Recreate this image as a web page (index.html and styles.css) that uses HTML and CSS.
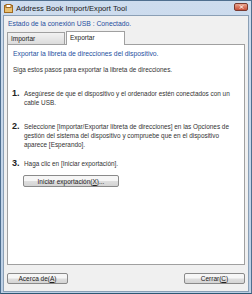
FILE: index.html
```html
<!DOCTYPE html>
<html lang="es">
<head>
    <meta charset="UTF-8">
    <title>Address Book Import/Export Tool</title>
    <link rel="stylesheet" href="styles.css">
</head>
<body>
    <div class="window">
        <div class="titlebar">
            <svg class="app-icon" width="9" height="9" viewBox="0 0 9 9">
                <rect x="0.5" y="1.5" width="8" height="7" fill="#e8c070" stroke="#a06a20"/>
                <rect x="2" y="0.5" width="5" height="3" fill="#fff" stroke="#a06a20"/>
            </svg>
            <span class="title">Address Book Import/Export Tool</span>
            <div class="close-btn">
                <svg width="7" height="6" viewBox="0 0 7 6">
                    <path d="M1 0.5 L6 5.5 M6 0.5 L1 5.5" stroke="#fff" stroke-width="1.4"/>
                </svg>
            </div>
        </div>
        <div class="client">
            <div class="status">Estado de la conexión USB : Conectado.</div>
            <div class="tabs">
                <div class="tab">Importar</div>
                <div class="tab active">Exportar</div>
            </div>
            <div class="panel">
                <div class="heading">Exportar la libreta de direcciones del dispositivo.</div>
                <p class="intro">Siga estos pasos para exportar la libreta de direcciones.</p>
                <div class="step">
                    <span class="num">1.</span>
                    <span class="text">Asegúrese de que el dispositivo y el ordenador estén conectados con un cable USB.</span>
                </div>
                <div class="step">
                    <span class="num">2.</span>
                    <span class="text">Seleccione [Importar/Exportar libreta de direcciones] en las Opciones de gestión del sistema del dispositivo y compruebe que en el dispositivo aparece [Esperando].</span>
                </div>
                <div class="step last">
                    <span class="num">3.</span>
                    <span class="text">Haga clic en [Iniciar exportación].</span>
                </div>
                <button class="btn start-btn">Iniciar exportación(<u>X</u>)...</button>
            </div>
            <div class="footer">
                <button class="btn">Acerca de(<u>A</u>)</button>
                <button class="btn">Cerrar(<u>C</u>)</button>
            </div>
        </div>
    </div>
</body>
</html>
```

FILE: styles.css
```css
body {
    margin: 0;
    padding: 0;
    font-family: "Liberation Sans", Arial, sans-serif;
}

.window {
    width: 252px;
    height: 294px;
    box-sizing: border-box;
    background: linear-gradient(#cddcee, #bccfe5);
    border: 1px solid #4f6f8f;
    border-bottom-color: #2c5873;
    display: flex;
    flex-direction: column;
}

.titlebar {
    height: 14px;
    flex-shrink: 0;
    display: flex;
    align-items: center;
    padding: 0 3px 0 3px;
}

.app-icon {
    margin-right: 3px;
}

.title {
    font-size: 7.6px;
    color: #1a1a1a;
}

.close-btn {
    margin-left: auto;
    width: 12px;
    height: 6px;
    margin-top: -2px;
    border: 1px solid #7a3a30;
    border-radius: 2px;
    background: linear-gradient(#eba48e, #c8503a);
    display: flex;
    align-items: center;
    justify-content: center;
}

.close-btn svg {
    width: 5px;
    height: 4px;
}

.client {
    flex: 1;
    margin: 0 2px 1px 2px;
    background: #f0f0f0;
    padding: 3px 3px 0 3px;
    display: flex;
    flex-direction: column;
    border: 1px solid #8a9fb5;
}

.status {
    font-size: 6.8px;
    color: #1e4fa0;
    margin-left: 1px;
    height: 9px;
    line-height: 9px;
}

.tabs {
    display: flex;
    align-items: flex-end;
    margin-top: 2px;
    height: 14px;
}

.tab {
    width: 58px;
    box-sizing: border-box;
    height: 12px;
    border: 1px solid #a0a0a0;
    border-bottom: none;
    background: linear-gradient(#f2f2f2, #dcdcdc);
    font-size: 6.5px;
    color: #222;
    padding-left: 3px;
    line-height: 12px;
}

.tab.active {
    width: 59px;
    height: 14px;
    background: #fff;
    margin-left: 1px;
    margin-bottom: -1px;
    position: relative;
    line-height: 11px;
}

.panel {
    height: 221px;
    flex-shrink: 0;
    box-sizing: border-box;
    background: #fff;
    border: 1px solid #a0a0a0;
    padding: 5px 8px 0 4px;
    font-size: 6.4px;
    color: #333;
}

.heading {
    color: #1e4fa0;
    font-size: 6.8px;
    margin-left: 1px;
}

.intro {
    margin: 9px 0 16px 1px;
}

.step {
    display: flex;
    line-height: 9px;
    margin-bottom: 15px;
}

.num {
    width: 12px;
    flex-shrink: 0;
    font-size: 9px;
    font-weight: bold;
    color: #222;
}

.step.last {
    margin-top: -5px;
    margin-bottom: 7px;
}

.btn {
    font-family: "Liberation Sans", Arial, sans-serif;
    font-size: 6.5px;
    color: #222;
    height: 12px;
    padding: 0;
    border: 1px solid #8a8a8a;
    border-radius: 2px;
    background: linear-gradient(#f6f6f6 45%, #dedede 55%, #d4d4d4);
}

.start-btn {
    width: 96px;
    margin-left: 11px;
}

.footer {
    display: flex;
    justify-content: space-between;
    margin-top: 8px;
}

.footer .btn {
    width: 61px;
    height: 11px;
}
```
